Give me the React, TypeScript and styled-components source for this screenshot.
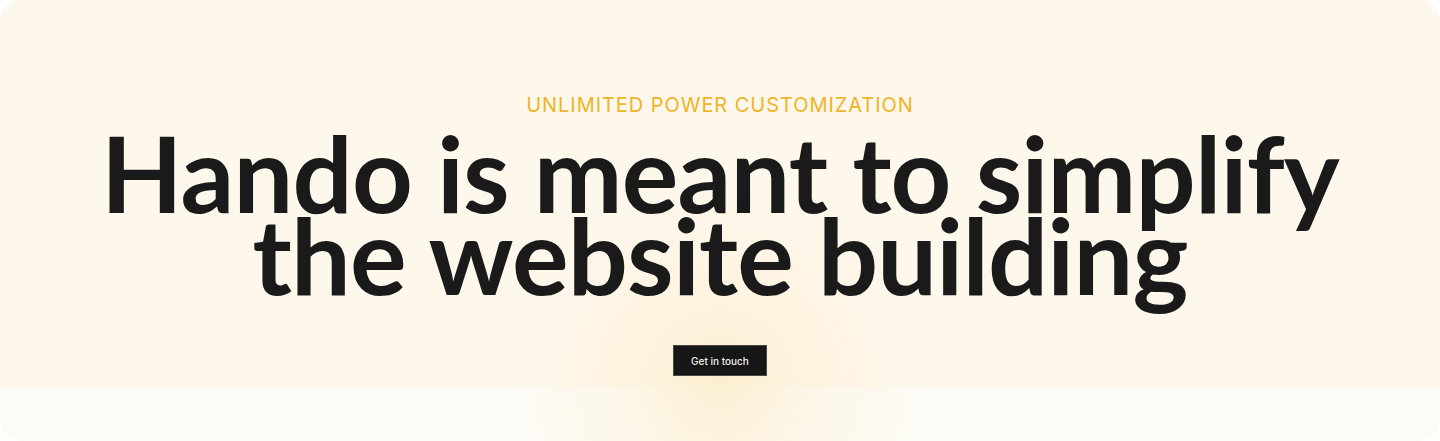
import React from "react";
import styled, { createGlobalStyle } from "styled-components";

const Global = createGlobalStyle`
  html, body { margin: 0; padding: 0; background: #ffffff; }
  body { font-family: "Inter", "Noto Sans", sans-serif; }
  * { box-sizing: border-box; }
`;

const Card = styled.section`
  position: relative;
  width: 1440px;
  height: 441px;
  border-radius: 22px;
  overflow: hidden;
  background: #fdfbf6;
  display: flex;
  flex-direction: column;
`;

const Hero = styled.div`
  height: 387px;
  background: #fef7ec;
  display: flex;
  flex-direction: column;
  align-items: center;
  padding-top: 93px;
`;

const Strip = styled.div`
  flex: 1;
  background: #fdfbf6;
`;

const Glow = styled.div`
  position: absolute;
  left: 720px;
  top: 385px;
  width: 420px;
  height: 420px;
  transform: translate(-50%, -50%);
  border-radius: 50%;
  background: radial-gradient(circle, rgba(250, 232, 190, 0.6) 0%, rgba(250, 234, 195, 0.28) 32%, rgba(250, 234, 195, 0) 68%);
  pointer-events: none;
`;

const Eyebrow = styled.div`
  font-family: "Inter", sans-serif;
  font-size: 20px;
  line-height: 24px;
  font-weight: 400;
  color: #f0b429;
  letter-spacing: 0.95px;
  position: relative;
  z-index: 1;
`;

const Title = styled.h1`
  margin: 14px 0 0;
  font-family: "Lato", sans-serif;
  font-weight: 700;
  font-size: 106px;
  line-height: 82px;
  color: #1a1a1a;
  text-align: center;
  letter-spacing: -0.8px;
  position: relative;
  z-index: 1;
`;

const Button = styled.button`
  margin-top: 50px;
  width: 94px;
  height: 31px;
  background: #161616;
  border: 1px solid #4a4640;
  color: #eeeeee;
  font-family: "Inter", sans-serif;
  font-size: 10px;
  font-weight: 500;
  position: relative;
  z-index: 1;
  cursor: pointer;
`;

export default function App() {
  return (
    <>
      <Global />
      <Card>
        <Hero>
          <Eyebrow>UNLIMITED POWER CUSTOMIZATION</Eyebrow>
          <Title>
            Hando is meant to simplify
            <br />
            the website building
          </Title>
          <Button>Get in touch</Button>
        </Hero>
        <Strip />
        <Glow />
      </Card>
    </>
  );
}
